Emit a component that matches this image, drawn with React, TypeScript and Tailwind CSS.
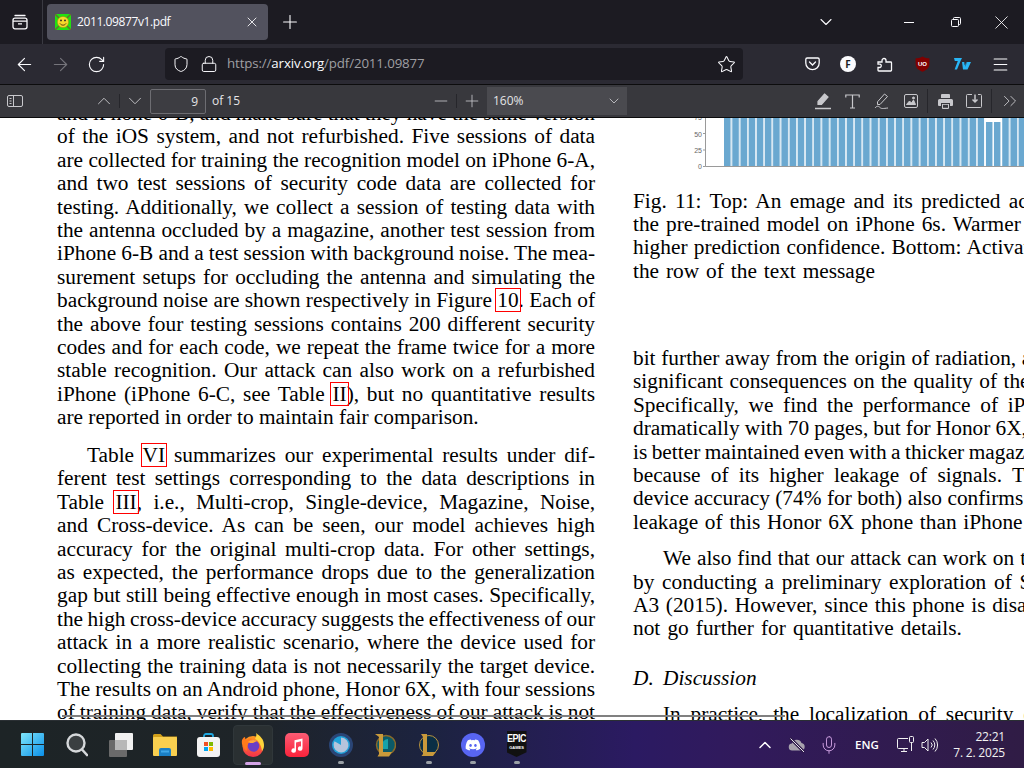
import React from "react";
import { ArrowLeft, ArrowRight, RotateCw, Plus, X, ChevronDown, ChevronUp, Minus, Menu, Star, Shield, Lock, Mic, ChevronsRight } from "lucide-react";
import { FaDiscord } from "react-icons/fa";

const J = ({ children, end, indent }: { children: React.ReactNode; end?: boolean; indent?: boolean }) => (
  <div className={`h-[23.4px] leading-[23.4px] whitespace-nowrap ${end ? "" : "[word-spacing:-2px] [text-align:justify] [text-align-last:justify]"} ${indent ? "pl-[30px]" : ""}`}>{children}</div>
);

const L = ({ children }: { children: React.ReactNode }) => (
  <span className="relative">
    {children}
    <span className="absolute -left-[2px] -right-[2px] top-0 bottom-0 border border-[#ff0000]" />
  </span>
);

const Favicon = () => (
  <svg width="16" height="16" viewBox="0 0 16 16" className="shrink-0">
    <rect width="16" height="16" fill="#22e010" />
    <path d="M0 0l4 4M16 0l-4 4M0 16l4-4M16 16l-4-4" stroke="#6a6a30" strokeWidth="1.4" />
    <circle cx="8" cy="8" r="5.6" fill="#f5d92a" stroke="#a08a10" strokeWidth=".5" />
    <circle cx="6" cy="6.4" r=".9" fill="#222" />
    <circle cx="10" cy="6.4" r=".9" fill="#222" />
    <path d="M5 9.5c1.5 2.2 4.5 2.2 6 0" stroke="#5a3a10" strokeWidth="1" fill="none" />
  </svg>
);

const Chart = () => {
  const bars = Array.from({ length: 37 }, (_, i) => i);
  return (
    <svg width="391" height="54" viewBox="0 0 391 54" className="block shrink-0">
      {bars.map((i) => {
        const x = 91 + i * 8.18;
        const short = i === 32 || i === 33;
        return <rect key={i} x={x} y={short ? 4 : 0} width={6.7} height={short ? 44 : 48} fill="#6aa8d0" />;
      })}
      {bars.map((i) => (
        <rect key={i} x={91 + i * 8.18 + 6.7} y={0} width={1.48} height={48} fill={i === 31 || i === 33 ? "#ffffff" : "#d6e7f2"} opacity={i === 32 ? 0 : 1} />
      ))}
      <path d="M72.5 0V48.5H391" stroke="#9a9a9a" strokeWidth="1" fill="none" />
      <path d="M70 15.5h2.5M70 32h2.5M70 48.5h2.5" stroke="#9a9a9a" strokeWidth="1" />
      <text x="69" y="2" textAnchor="end" fontSize="7" fill="#666" fontFamily="Liberation Sans">75</text>
      <text x="69" y="18.5" textAnchor="end" fontSize="7" fill="#666" fontFamily="Liberation Sans">50</text>
      <text x="69" y="34.5" textAnchor="end" fontSize="7" fill="#666" fontFamily="Liberation Sans">25</text>
      <text x="69" y="51" textAnchor="end" fontSize="7" fill="#666" fontFamily="Liberation Sans">0</text>
    </svg>
  );
};

const Dot = ({ on }: { on?: boolean }) => (
  <div className={`absolute bottom-[5px] left-1/2 -translate-x-1/2 h-[3px] w-[6px] rounded-full bg-[#9aa0a6] ${on ? "" : "hidden"}`} />
);

const TaskItem = ({ children, dot, active }: { children: React.ReactNode; dot?: boolean; active?: boolean }) => (
  <div className="relative w-[44px] h-[48px] flex items-center justify-center shrink-0">
    {active && <div className="absolute left-[2px] right-[2px] top-[4px] bottom-[4px] rounded-[4px] bg-[#2a3032] border border-[#30373a]" />}
    <div className="relative flex items-center justify-center">{children}</div>
    <Dot on={dot} />
    {active && <div className="absolute bottom-[4px] left-1/2 -translate-x-1/2 h-[3px] w-[16px] rounded-full bg-[#d3a4e6]" />}
  </div>
);

const leftA = [
  "of the iOS system, and not refurbished. Five sessions of data",
  "are collected for training the recognition model on iPhone 6-A,",
  "and two test sessions of security code data are collected for",
  "testing. Additionally, we collect a session of testing data with",
  "the antenna occluded by a magazine, another test session from",
  "iPhone 6-B and a test session with background noise. The mea-",
  "surement setups for occluding the antenna and simulating the",
];
const leftB = [
  "the above four testing sessions contains 200 different security",
  "codes and for each code, we repeat the frame twice for a more",
  "stable recognition. Our attack can also work on a refurbished",
];
const leftC = [
  "accuracy for the original multi-crop data. For other settings,",
  "as expected, the performance drops due to the generalization",
  "gap but still being effective enough in most cases. Specifically,",
  "the high cross-device accuracy suggests the effectiveness of our",
  "attack in a more realistic scenario, where the device used for",
  "collecting the training data is not necessarily the target device.",
  "The results on an Android phone, Honor 6X, with four sessions",
  "of training data, verify that the effectiveness of our attack is not",
];
const rightA = [
  "bit further away from the origin of radiation, and this has very,",
  "significant consequences on the quality of the received signal.",
  "Specifically, we find the performance of iPhone 6-A drops.",
  "dramatically with 70 pages, but for Honor 6X, the performance",
  "is better maintained even with a thicker magazine, which can be",
  "because of its higher leakage of signals. The higher cross-",
  "device accuracy (74% for both) also confirms the higher signal",
  "leakage of this Honor 6X phone than iPhone 6-A and 6s also.",
];
const rightB = [
  "by conducting a preliminary exploration of Samsung Galaxy,",
  "A3 (2015). However, since this phone is disassembled, we do",
];

export default function App() {
  return (
    <div className="relative w-[1024px] h-[768px] overflow-hidden flex flex-col bg-white font-['Open_Sans','Noto_Sans',sans-serif]">
      {/* tab strip */}
      <div className="h-[44px] shrink-0 bg-[#1c1b22] flex items-center text-[#fbfbfe]">
        <div className="w-[43px] h-full border-r border-[#3a3a42] flex items-center justify-center shrink-0">
          <svg width="16" height="16" viewBox="0 0 16 16" fill="none" stroke="#fbfbfe" strokeWidth="1.3" className="-ml-[2px]">
            <path d="M3 1.5h10" strokeLinecap="round" />
            <rect x="1" y="4.2" width="14" height="10.6" rx="2" />
            <path d="M1 7.2h14M6 9.8h4" />
          </svg>
        </div>
        <div className="ml-[4px] w-[221px] h-[36px] rounded-[4px] bg-[#52525e] flex items-center pl-[8px] shrink-0">
          <Favicon />
          <span className="ml-[6px] text-[12px] leading-none tracking-[-0.4px]">2011.09877v1.pdf</span>
          <X size={16} strokeWidth={1.3} className="ml-auto mr-[8px]" />
        </div>
        <Plus size={22} strokeWidth={1.2} className="ml-[11px] shrink-0" />
        <ChevronDown size={20} strokeWidth={1.3} className="ml-[515px] shrink-0" />
        <div className="ml-[68px] w-[10px] h-px bg-[#fbfbfe] shrink-0" />
        <svg width="12" height="12" viewBox="0 0 12 12" fill="none" stroke="#fbfbfe" strokeWidth="1" className="ml-[36px] shrink-0">
          <rect x="1.5" y="3.5" width="7" height="7" rx="1" />
          <path d="M3.5 3V2.5a1 1 0 0 1 1-1h5a1 1 0 0 1 1 1v5a1 1 0 0 1-1 1H9" />
        </svg>
        <X size={23} strokeWidth={0.9} className="ml-[28px] shrink-0" />
      </div>

      {/* nav bar */}
      <div className="h-[41px] shrink-0 bg-[#2b2a33] border-b border-[#0c0c0d] flex items-center text-[#fbfbfe]">
        <ArrowLeft size={21} strokeWidth={1.3} className="ml-[14px] shrink-0" />
        <ArrowRight size={21} strokeWidth={1.3} className="ml-[15px] shrink-0 text-[#75747b]" />
        <RotateCw size={19} strokeWidth={1.4} className="ml-[16px] shrink-0" />
        <div className="ml-[59px] w-[578px] h-[32px] rounded-[4px] bg-[#1c1b22] flex items-center pl-[7px] shrink-0">
          <Shield size={18} strokeWidth={1.3} className="shrink-0" />
          <Lock size={18} strokeWidth={1.3} className="ml-[10px] shrink-0" />
          <span className="ml-[9px] text-[13.3px] leading-none text-[#9f9fa3] tracking-[-0.13px]">https://<span className="text-[#fbfbfe]">arxiv.org</span>/pdf/2011.09877</span>
          <Star size={19} strokeWidth={1.3} className="ml-auto mr-[7px] shrink-0" />
        </div>
        <svg width="15" height="14" viewBox="0 0 15 14" fill="none" stroke="#fbfbfe" strokeWidth="1.3" className="ml-[62px] shrink-0">
          <path d="M2.2 1h10.6A1.5 1.5 0 0 1 14.2 2.5V6a6.7 6.7 0 0 1-13.4 0V2.5A1.5 1.5 0 0 1 2.200 1z" />
          <path d="M4.500 5l3 3 3-3" strokeLinecap="round" />
        </svg>
        <div className="ml-[20px] w-[16px] h-[16px] rounded-full bg-[#fbfbfe] flex items-center justify-center text-[#1c1b22] text-[10px] font-bold leading-none shrink-0">F</div>
        <svg width="16" height="16" viewBox="0 0 16 16" fill="none" stroke="#fbfbfe" strokeWidth="1.3" className="ml-[21px] shrink-0">
          <path d="M1 6h4V4.500a2 2 0 0 1 4 0V6h0v0h4.700a.8.8 0 0 1 .8.8V14.200a.8.8 0 0 1-.8.8H1.800a.8.8 0 0 1-.8-.8V11.500h2a1.700 1.700 0 0 0 0-3.300H1z" />
        </svg>
        <svg width="15" height="16" viewBox="0 0 15 16" className="ml-[22px] shrink-0">
          <path d="M7.500 .5C5 2 2.500 2.300 .6 2.300V8c0 4 3.500 6.500 6.900 7.800C11 14.500 14.400 12 14.400 8V2.300C12.500 2.300 10 2 7.500 .5z" fill="#800000" />
          <text x="7.500" y="9.500" textAnchor="middle" fontSize="6" fontWeight="700" fill="#fff" fontFamily="Liberation Sans">UO</text>
        </svg>
        <svg width="17" height="12" viewBox="0 0 17 12" className="ml-[24px] shrink-0">
          <path d="M0 0h8l-1.500 3-3.500 8.500H.6L3.800 3H.8z" fill="#29b6f6" />
          <path d="M8 4h2.300l.3 3.300L12.300 4H17l-3.500 7.500H9z" fill="#29b6f6" />
          <path d="M10.800 4h2.500l-2.200 5z" fill="#2b2a33" opacity=".5" />
        </svg>
        <Menu size={19} strokeWidth={1.3} className="ml-[20px] shrink-0" />
      </div>

      {/* pdf toolbar */}
      <div className="h-[33px] shrink-0 bg-[#38383d] border-b border-[#0c0c0d] flex items-center text-[#c8c8cc]">
        <svg width="16" height="13" viewBox="0 0 16 13" fill="none" stroke="#c8c8cc" strokeWidth="1" className="ml-[7px] shrink-0">
          <rect x=".5" y=".5" width="15" height="11" rx="1.500" />
          <path d="M6.500 .5v11M2.500 3.500h2M2.500 6h2M2.500 8.500h2" />
        </svg>
        <ChevronUp size={22} strokeWidth={1} className="ml-[70px] shrink-0" />
        <div className="ml-[4px] w-px h-[14px] bg-[#26262b] shrink-0" />
        <ChevronDown size={22} strokeWidth={1} className="ml-[4px] shrink-0" />
        <div className="ml-[4px] w-[56px] h-[25px] border border-[#6d6d72] rounded-[2px] bg-[#3d3d42] text-right pr-[7px] text-[12px] leading-[23px] text-[#e4e4e6] shrink-0">9</div>
        <span className="ml-[6px] w-[28px] whitespace-nowrap text-[12px] leading-none text-[#e4e4e6] shrink-0">of 15</span>
        <Minus size={20} strokeWidth={1} className="ml-[191px] shrink-0" />
        <div className="ml-[5px] w-px h-[14px] bg-[#26262b] shrink-0" />
        <Plus size={20} strokeWidth={1} className="ml-[5px] shrink-0" />
        <div className="ml-[5px] w-[140px] h-[28px] bg-[#4a4a4f] flex items-center pl-[6px] pr-[5px] shrink-0">
          <span className="text-[12px] leading-none text-[#e4e4e6]">160%</span>
          <ChevronDown size={16} strokeWidth={1.3} className="ml-auto" />
        </div>
        <svg width="16" height="18" viewBox="0 0 16 18" fill="none" stroke="#c8c8cc" strokeWidth="1.2" className="ml-[188px] shrink-0">
          <path d="M9.500 2l3.500 3-6.500 7.500H3v-3z" fill="#c8c8cc" />
          <path d="M0 16.500h16" strokeWidth="1.500" />
        </svg>
        <svg width="15" height="15" viewBox="0 0 15 15" fill="none" stroke="#c8c8cc" strokeWidth="1.2" className="ml-[14px] shrink-0">
          <path d="M.8 3.500V1h13.400v2.500M7.500 1v13M5 14h5" />
        </svg>
        <svg width="15" height="17" viewBox="0 0 15 17" fill="none" stroke="#c8c8cc" strokeWidth="1" className="ml-[14px] shrink-0">
          <path d="M10.500 1l3 2.500-7.500 8H3.500v-2.700zM1 15c2-2.500 3.500-2 5-.5s3 1 8 .5" />
        </svg>
        <svg width="14" height="14" viewBox="0 0 14 14" fill="none" stroke="#c8c8cc" strokeWidth="1" className="ml-[15px] shrink-0">
          <rect x=".5" y=".5" width="13" height="13" rx="1.500" />
          <path d="M2.500 10.500l3-3.500 2 2 2-3 2 4.500z" fill="#c8c8cc" />
          <circle cx="9.500" cy="4" r="1" fill="#c8c8cc" />
        </svg>
        <div className="ml-[9px] w-px h-[24px] bg-[#26262b] shrink-0" />
        <svg width="15" height="15" viewBox="0 0 15 15" className="ml-[10px] shrink-0">
          <path d="M4 0h7a1 1 0 0 1 1 1v3H3V1a1 1 0 0 1 1-1zM1.500 5h12A1.500 1.500 0 0 1 15 6.500V11a1 1 0 0 1-1 1h-2V9H3v3H1a1 1 0 0 1-1-1V6.500A1.500 1.500 0 0 1 1.500 5zM4 10h7v4a1 1 0 0 1-1 1H5a1 1 0 0 1-1-1z" fill="#c8c8cc" />
          <rect x="5" y="10.800" width="5" height="3" fill="#38383d" />
        </svg>
        <svg width="16" height="14" viewBox="0 0 16 14" fill="none" stroke="#c8c8cc" strokeWidth="1" className="ml-[13px] shrink-0">
          <path d="M6 .5H1.500a1 1 0 0 0-1 1v11a1 1 0 0 0 1 1h13a1 1 0 0 0 1-1v-11a1 1 0 0 0-1-1H12" />
          <path d="M9 .5v7M6.500 5.500L9 8l2.500-2.500" strokeWidth="1.500" />
        </svg>
        <div className="ml-[9px] w-px h-[24px] bg-[#26262b] shrink-0" />
        <ChevronsRight size={22} strokeWidth={1} className="ml-[7px] shrink-0" />
      </div>

      {/* content */}
      <div className="relative flex-1 min-h-0 overflow-hidden bg-white flex text-black text-[21.33px] font-['Liberation_Serif',serif]">
        <div className="ml-[57px] w-[538px] shrink-0 -mt-[16px]">
          <J>and iPhone 6-B, and make sure that they have the same version</J>
          {leftA.map((t) => <J key={t}>{t}</J>)}
          <J>background noise are shown respectively in Figure <L>10</L>. Each of</J>
          {leftB.map((t) => <J key={t}>{t}</J>)}
          <J>iPhone (iPhone 6-C, see Table <L>II</L>), but no quantitative results</J>
          <J end>are reported in order to maintain fair comparison.</J>
          <div className="h-[14.6px]" />
          <J indent>Table <L>VI</L> summarizes our experimental results under dif-</J>
          <J>ferent test settings corresponding to the data descriptions in</J>
          <J>Table <L>III</L>, i.e., Multi-crop, Single-device, Magazine, Noise,</J>
          <J>and Cross-device. As can be seen, our model achieves high</J>
          {leftC.map((t) => <J key={t}>{t}</J>)}
        </div>
        <div className="ml-[38px] w-[538px] shrink-0 flex flex-col">
          <Chart />
          <div className="mt-[17.5px]">
            <J>Fig. 11: Top: An emage and its predicted activation map for</J>
            <J>the pre-trained model on iPhone 6s. Warmer colors indicate a</J>
            <J>higher prediction confidence. Bottom: Activation values along</J>
            <div className="[word-spacing:1.6px]"><J end>the row of the text message</J></div>
          </div>
          <div className="mt-[64px]">
            {rightA.map((t) => <J key={t}>{t}</J>)}
          </div>
          <div className="mt-[13px]">
            <J indent>We also find that our attack can work on the iPhone 6 Plus</J>
            {rightB.map((t) => <J key={t}>{t}</J>)}
            <div className="[word-spacing:1.8px]"><J end>not go further for quantitative details.</J></div>
          </div>
          <div className="mt-[26px]"><J end><i className="inline-block w-[30px]">D.</i><i>Discussion</i></J></div>
          <div className="mt-[13px]"><J indent>In practice, the localization of security codes on the tip</J></div>
        </div>
        <div className="absolute left-[62px] top-[597px] w-[723px] h-[2px] bg-[#808080]" />
      </div>

      {/* taskbar */}
      <div className="h-[48px] shrink-0 border-t border-[#2a2f33] bg-[linear-gradient(90deg,#1d2426_0%,#1e2428_25%,#1c2340_42%,#2b1a62_62%,#311a5c_72%,#301c45_100%)] flex items-center text-white pl-[10.5px]">
        <TaskItem>
          <svg width="23" height="23" viewBox="0 0 23 23">
            <defs><linearGradient id="w" x1="0" y1="0" x2="1" y2="1"><stop offset="0" stopColor="#7fe6fb" /><stop offset="1" stopColor="#0a8fe8" /></linearGradient></defs>
            <path d="M1 0h10v11H0V1a1 1 0 0 1 1-1zM12 0h10a1 1 0 0 1 1 1v10H12zM0 12h11v11H1a1 1 0 0 1-1-1zM12 12h11v10a1 1 0 0 1-1 1H12z" fill="url(#w)" />
          </svg>
        </TaskItem>
        <TaskItem>
          <svg width="22" height="24" viewBox="0 0 22 24" fill="none">
            <circle cx="10" cy="10" r="8.500" fill="#3a3f41" stroke="#d5d8da" strokeWidth="2.400" />
            <path d="M16 16.500l5 5.500" stroke="#d5d8da" strokeWidth="2.600" strokeLinecap="round" />
          </svg>
        </TaskItem>
        <TaskItem>
          <svg width="24" height="24" viewBox="0 0 24 24">
            <rect x="6" y="0" width="18" height="17" rx="1" fill="#f0f0f0" />
            <rect x="0" y="7" width="18" height="17" rx="1" fill="#6a6a6a" />
            <rect x="6" y="7" width="12" height="10" fill="#b8b8b8" />
          </svg>
        </TaskItem>
        <TaskItem>
          <svg width="24" height="22" viewBox="0 0 24 22">
            <path d="M0 1.500A1.500 1.500 0 0 1 1.500 0h6l2.500 2.500h14V6H0z" fill="#d19f1a" />
            <rect x="0" y="3" width="24" height="19" rx="1" fill="#f9cf4f" />
            <path d="M6 22v-6a2 2 0 0 1 2-2h8a2 2 0 0 1 2 2v6z" fill="#1a7fc4" />
            <rect x="8" y="16.500" width="8" height="2" fill="#40a8e8" />
          </svg>
        </TaskItem>
        <TaskItem>
          <svg width="23" height="24" viewBox="0 0 23 24">
            <path d="M7 7V3a2 2 0 0 1 2-2h5a2 2 0 0 1 2 2v4" fill="none" stroke="#1fa8e0" strokeWidth="1.800" />
            <rect x="0" y="4" width="23" height="20" rx="3" fill="#f3f3f3" />
            <rect x="7" y="9" width="4" height="4" fill="#f25022" />
            <rect x="12" y="9" width="4" height="4" fill="#7fba00" />
            <rect x="7" y="14" width="4" height="4" fill="#00a4ef" />
            <rect x="12" y="14" width="4" height="4" fill="#ffb900" />
          </svg>
        </TaskItem>
        <TaskItem active>
          <svg width="24" height="24" viewBox="0 0 24 24">
            <defs><linearGradient id="ff" x1="0" y1="0" x2="0" y2="1"><stop offset="0" stopColor="#ff9a1f" /><stop offset="1" stopColor="#f5304c" /></linearGradient></defs>
            <circle cx="12" cy="13.500" r="10.500" fill="url(#ff)" />
            <path d="M15 0c4 3 8 6 8 12 0 3-1 5-2 6-1-7-4-11-7-12 1-2 2-4 1-6z" fill="#ffd43a" />
            <path d="M1 7c1-2 2-3 3-3 0 2 1 3 2 3 1-1 4-2 5-1-3 2-6 7-5 12-3-2-6-6-5-11z" fill="#ff7a1a" />
            <circle cx="12.500" cy="13" r="5.800" fill="#6a3fc4" />
            <path d="M7 9c2-2 6-3 9-1l-4 2c-2 0-4 0-5-1z" fill="#ffa83a" />
          </svg>
        </TaskItem>
        <TaskItem>
          <svg width="24" height="24" viewBox="0 0 24 24">
            <defs><linearGradient id="am" x1="0" y1="0" x2="0" y2="1"><stop offset="0" stopColor="#fb5c74" /><stop offset="1" stopColor="#fa233b" /></linearGradient></defs>
            <rect width="24" height="24" rx="5" fill="url(#am)" />
            <path d="M9.500 7.200L17.500 5.500V15.500a2.300 2.300 0 1 1-1.500-2.100V8.300L11 9.400V17.500a2.300 2.300 0 1 1-1.500-2.100z" fill="#fff" />
          </svg>
        </TaskItem>
        <TaskItem dot>
          <svg width="24" height="24" viewBox="0 0 24 24">
            <circle cx="12" cy="12" r="12" fill="#2a4576" />
            <circle cx="12" cy="12" r="9" fill="#1fa0d8" />
            <path d="M12 4.500a7.500 7.500 0 1 1-6.500 3.800L12 12z" fill="#b4c4dc" />
          </svg>
        </TaskItem>
        <TaskItem>
          <svg width="22" height="24" viewBox="0 0 22 24">
            <circle cx="12" cy="12" r="9.500" fill="#0c5a68" stroke="#8a6a28" strokeWidth="1.500" />
            <path d="M8 12a6 6 0 0 1 6-6v10H8z" fill="#17a2a8" />
            <path d="M1 1h8v18h9l-3 4.500H3.500L5 21V4z" fill="#c99a3b" />
          </svg>
        </TaskItem>
        <TaskItem dot>
          <svg width="20" height="24" viewBox="0 0 20 24">
            <circle cx="10" cy="12" r="9.500" fill="#0a2f45" stroke="#b8923e" strokeWidth="1" />
            <path d="M2 1h6v18h9l-3 4H2.500L4 21V4z" fill="#c99a3b" />
          </svg>
        </TaskItem>
        <TaskItem dot>
          <div className="w-[24px] h-[24px] rounded-full bg-[#5865f2] flex items-center justify-center"><FaDiscord size={16} color="#fff" /></div>
        </TaskItem>
        <TaskItem dot>
          <div className="relative w-[20px] h-[26px] -mt-[1px] bg-[#111] [clip-path:polygon(0_0,100%_0,100%_82%,50%_100%,0_82%)] flex flex-col items-center pt-[2px] leading-none font-['Liberation_Sans',sans-serif] text-white">
            <span className="text-[9px] font-bold tracking-[-0.5px] scale-y-125 mt-[1px]">EPIC</span>
            <span className="text-[4px] font-bold mt-[3px]">GAMES</span>
          </div>
        </TaskItem>
        <ChevronUp size={20} strokeWidth={1.8} className="ml-[216.500px] shrink-0" />
        <svg width="18" height="18" viewBox="0 0 18 18" className="ml-[13px] shrink-0">
          <path d="M4.500 14.500a3.500 3.500 0 0 1-.5-7 5 5 0 0 1 9.500-.5 3.800 3.800 0 0 1 0 7.500z" fill="#a7a2ad" />
          <path d="M2 2l14 14" stroke="#2f1b4c" strokeWidth="3" />
          <path d="M2.500 2.500l13.500 13.500" stroke="#e8e6ea" strokeWidth="1" />
        </svg>
        <Mic size={20} strokeWidth={1.1} className="ml-[13px] text-[#d3a4e6] shrink-0" />
        <span className="ml-[16px] text-[11.5px] font-semibold leading-none shrink-0">ENG</span>
        <svg width="17" height="17" viewBox="0 0 17 17" fill="none" stroke="#f2f2f2" strokeWidth="1" className="ml-[18px] shrink-0">
          <path d="M11 2.500H1.500a1 1 0 0 0-1 1v8a1 1 0 0 0 1 1H11M4 15.500h6M7 12.500v3" />
          <rect x="12.500" y=".5" width="4" height="6" rx="1" />
          <path d="M14.500 7v8" />
        </svg>
        <svg width="17" height="16" viewBox="0 0 17 16" fill="none" stroke="#f2f2f2" strokeWidth="1" className="ml-[7px] shrink-0">
          <path d="M1 5.500h2.500L7 2v12l-3.500-3.500H1z" />
          <path d="M10 5.500a3.500 3.500 0 0 1 0 5M12 3.500a6.500 6.500 0 0 1 0 9M14 1.500a9.500 9.500 0 0 1 0 13" />
        </svg>
        <div className="ml-auto mr-[19px] flex flex-col items-end gap-[3px] text-[12px] tracking-[-0.2px] leading-[13px] text-[#f2f2f2] shrink-0">
          <span>22:21</span>
          <span>7. 2. 2025</span>
        </div>
      </div>
    </div>
  );
}
